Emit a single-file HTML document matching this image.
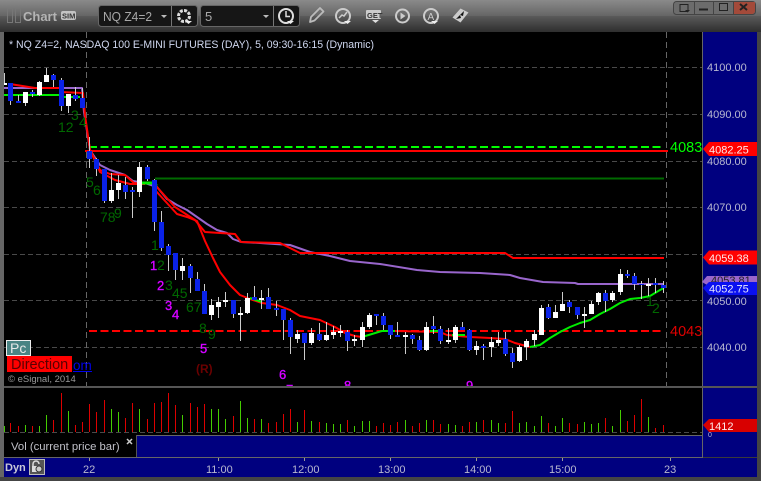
<!DOCTYPE html>
<html><head><meta charset="utf-8"><style>
html,body{margin:0;padding:0;background:#333;overflow:hidden}
svg{display:block}
text{font-family:"Liberation Sans",sans-serif}
.ax{font-size:11px;fill:#b8b8d0}
.g{font-size:14px;fill:#006800}
.m{font-size:13px;fill:#f0f;stroke:#a0f;stroke-width:.4}
</style></head><body>
<svg width="761" height="481" viewBox="0 0 761 481" xmlns="http://www.w3.org/2000/svg">
<defs>
<linearGradient id="t1" x1="0" y1="0" x2="0" y2="1"><stop offset="0" stop-color="#8a8a8a"/><stop offset="1" stop-color="#656565"/></linearGradient>
<linearGradient id="t2" x1="0" y1="0" x2="0" y2="1"><stop offset="0" stop-color="#5a5a5a"/><stop offset="1" stop-color="#2e2e2e"/></linearGradient>
<clipPath id="c"><rect x="4" y="32" width="698" height="354"/></clipPath>
</defs>
<rect width="761" height="481" fill="#3a3a3a"/>
<rect width="761" height="16" fill="url(#t1)"/>
<rect y="16" width="761" height="16" fill="url(#t2)"/>
<rect x="0" y="32" width="4" height="449" fill="#666"/>
<rect x="757" y="32" width="4" height="449" fill="#444"/>
<rect y="477" width="761" height="4" fill="#444"/>
<!-- toolbar -->
<g fill="none" stroke="#777" stroke-width="1"><rect x="7.5" y="8.5" width="5" height="14"/><rect x="15.5" y="8.5" width="5" height="14"/></g>
<text x="23" y="21" font-size="13" font-weight="bold" fill="#b4b4b4">Chart</text>
<rect x="61" y="11" width="15" height="9" rx="2" fill="#c4c4c4"/>
<text x="62" y="18.5" font-size="7.5" font-weight="bold" fill="#333">SIM</text>
<rect x="98.5" y="5.5" width="99" height="21" rx="3" fill="#161616" stroke="#666"/>
<rect x="200.5" y="5.5" width="99" height="21" rx="3" fill="#161616" stroke="#666"/>
<path d="M171.5 6V26M273.5 6V26" stroke="#777"/>
<text x="103" y="21" font-size="13" fill="#a8a8a8" textLength="49" lengthAdjust="spacingAndGlyphs">NQ Z4=2</text>
<text x="205" y="21" font-size="13" fill="#a8a8a8">5</text>
<path d="M161 15h6l-3 3zM263 15h6l-3 3z" fill="#bbb"/>
<!-- gear -->
<circle cx="184" cy="16" r="5.5" fill="none" stroke="#ddd" stroke-width="3" stroke-dasharray="3 1.3"/>
<circle cx="184" cy="16" r="2" fill="#161616"/>
<path d="M185 21h7l-3.500 3z" fill="#eee"/>
<!-- clock -->
<circle cx="286" cy="16" r="7" fill="none" stroke="#ddd" stroke-width="2"/>
<path d="M286 11v5.500h4" fill="none" stroke="#ddd" stroke-width="1.500"/>
<path d="M287 21h7l-3.500 3z" fill="#eee"/>
<!-- pencil -->
<path d="M310 22l1-5 9-9 3.500 3.500-9 9z" fill="none" stroke="#bbb" stroke-width="1.800" stroke-linejoin="round"/>
<!-- gauge -->
<circle cx="343" cy="16" r="7" fill="none" stroke="#ccc" stroke-width="2"/>
<path d="M339 18l3-3 2 1 3-4" fill="none" stroke="#ccc" stroke-width="1.500"/>
<path d="M344 21h7l-3.500 3z" fill="#eee"/>
<!-- GET -->
<rect x="366" y="10" width="15" height="9" rx="1" fill="#ccc"/>
<text x="367" y="18" font-size="7.500" font-weight="bold" fill="#333">GET</text>
<path d="M372 20h7l-3.500 3z" fill="#ddd"/>
<!-- play -->
<circle cx="402.500" cy="16" r="6.500" fill="none" stroke="#ccc" stroke-width="2"/>
<path d="M400.500 12.500l5 3.500-5 3.500z" fill="#ccc"/>
<!-- A -->
<circle cx="431" cy="16" r="7" fill="none" stroke="#ccc" stroke-width="2"/>
<text x="427.500" y="20" font-size="10" fill="#ccc">A</text>
<path d="M431 21h7l-3.500 3z" fill="#eee"/>
<!-- ticket -->
<path d="M453 18l8-9 8 4-8 10z" fill="#ccc" transform="translate(-.5 -.5)"/>
<path d="M456 19l4-4 1 3zM464 11l-4 4 3 1z" fill="#111"/>
<!-- window buttons -->
<rect x="673.500" y="1.500" width="82" height="13" rx="3" fill="#6c6c6c" stroke="#444"/>
<path d="M694.500 2V14M713.500 2V14M733.500 2V14" stroke="#444"/>
<path d="M734 2h21v9a3 3 0 0 1-3 3h-18z" fill="#a34a3a"/>
<path d="M680 4.500h8v7h-8z" fill="none" stroke="#222"/>
<path d="M685 10h5l-2.500 2.500z" fill="#222"/>
<path d="M699 9.500h9" stroke="#222" stroke-width="2"/>
<rect x="719.500" y="3.500" width="8" height="7" fill="none" stroke="#222"/>
<path d="M740 4l7 6M747 4l-7 6" stroke="#222" stroke-width="2"/>

<!-- chart panel -->
<rect x="4" y="32" width="698" height="354" fill="#000"/>
<rect x="703" y="32" width="54" height="425" fill="#00007f"/>
<path d="M702.500 32V457" stroke="#666"/>
<rect x="4" y="386" width="753" height="2" fill="#555"/>
<rect x="4" y="388" width="698" height="47" fill="#000"/>
<text x="9" y="48" font-size="11" fill="#d0d8f0" textLength="365" lengthAdjust="spacingAndGlyphs">* NQ Z4=2, NASDAQ 100 E-MINI FUTURES (DAY), 5, 09:30-16:15 (Dynamic)</text>

<g clip-path="url(#c)">
<path d="M4 67.500H702M4 114.500H702M4 161.500H702M4 207.500H702M4 254.500H702M4 300.500H702M4 347.500H702" stroke="#4a4a4a" stroke-dasharray="5 3"/>
<path d="M86.500 32V386M666.500 32V386" stroke="#666" stroke-dasharray="6 4"/>
<path d="M89 147H664" stroke="#00ff00" stroke-width="2" stroke-dasharray="8 3.500"/>
<path d="M85 151H668" stroke="#ff0000" stroke-width="2"/>
<path d="M155 178.500H664" stroke="#006a00" stroke-width="2"/>
<path d="M89 331H664" stroke="#ff0000" stroke-width="2" stroke-dasharray="8 3.500"/>
<text x="670" y="152" font-size="14.500" fill="#00ff00">4083</text>
<text x="670" y="336" font-size="14.500" fill="#e00000">4043</text>

<!-- EMA lines -->
<g fill="none" stroke-width="2" stroke-linejoin="round">
<path d="M4 88H82L84 112 90 150 100 165 110 170 125 175 133 181 145 183 157 187 167 199 177 205 187 210 197 217 207 224 217 230 227 233 233 239 241 242 260 243 290 245 310 252 330 256 350 261 380 264 417 270 440 272 480 273 510 275 520 278 543 282 575 283 578 284 664 284" stroke="#9966cc"/>
<path d="M4 95H60M40 88H60" stroke="#00ee00"/>
<path d="M60 97H80" stroke="#00ee00"/>
<path d="M10 84 35 88 60 88M60 92 83 93 85 115 90 150 100 170 110 174 125 175 134 183 145 184" stroke="#ff0000"/>
<path d="M90 150 100 172 115 180 130 184 145 184" stroke="#ff0000"/>
<path d="M140 183H152L157 186" stroke="#00ee00" stroke-width="3"/>
<path d="M155 185 175 207 195 220 205 232 235 234 241 242 280 243 300 253H505L513 258H664" stroke="#ff0000"/>
<path d="M155 190 177 214 187 217 197 221 205 241 213 258 220 272 230 285 240 295 250 299 262 303 277 305 290 310 300 316 320 320 335 327 345 333 355 336 362 337" stroke="#ff0000"/>
<path d="M362 337 372 334 382 331 395 331" stroke="#00ee00"/>
<path d="M395 331 440 332 447 335 470 337 490 338 505 339 515 343 530 347" stroke="#ff0000"/>
<path d="M430 331H440M452 335H465" stroke="#00ee00"/>
<path d="M530 347 540 345 550 338 560 332 570 327 580 323 590 320 600 314 610 309 620 303 630 299 640 298 650 296 660 290 664 288" stroke="#00ee00"/>
<path d="M250 298 262 302" stroke="#00ee00"/>
</g>

<!-- numbers -->
<text class="g" x="58" y="132">12</text><text class="g" x="71" y="120">3</text><text class="g" x="79" y="127">4</text>
<text class="g" x="86" y="187">5</text><text class="g" x="93" y="195">6</text><text class="g" x="100" y="222">78</text><text class="g" x="114" y="218">9</text>
<text class="g" x="151" y="250">1</text><text class="g" x="157" y="270">2</text><text class="g" x="165" y="290">3</text><text class="g" x="172" y="298">45</text><text class="g" x="186" y="312">67</text><text class="g" x="199" y="333">8</text><text class="g" x="208" y="339">9</text>
<text class="g" x="646" y="306">1</text><text class="g" x="652" y="313">2</text>
<text class="m" x="150" y="270">1</text><text class="m" x="157" y="290">2</text><text class="m" x="165" y="310">3</text><text class="m" x="172" y="319">4</text><text class="m" x="200" y="353">5</text>
<text class="m" x="279" y="379">6</text><text class="m" x="286" y="394">7</text><text class="m" x="344" y="390">8</text><text class="m" x="466" y="390">9</text>
<text x="196" y="373" font-size="12" font-weight="bold" fill="#6a0000">(R)</text>

<!-- wicks -->
<path shape-rendering="crispEdges" stroke="#cccccc" stroke-width="1" fill="none" d="M4.500 73V85M10.500 83V105M18.500 95V103M25.500 92V106M32.500 90V97M39.500 81V96M46.500 68V82M53.500 74V87M61.500 78V111M68.500 94V113M75.500 87V101M82.500 88V108M89.500 137V168M96.500 158V176M104.500 169V203M111.500 173V203M118.500 175V199M125.500 177V199M132.500 187V218M139.500 162V197M147.500 165V181M154.500 179V231M161.500 211V251M168.500 244V271M175.500 253V280M182.500 258V280M190.500 264V293M197.500 272V291M204.500 284V314M211.500 299V320M218.500 297V318M225.500 292V307M233.500 300V318M240.500 307V341M247.500 293V314M254.500 286V300M261.500 290V309M268.500 288V309M276.500 301V316M283.500 309V340M290.500 318V354M297.500 330V343M304.500 333V360M311.500 328V345M319.500 323V341M326.500 322V341M333.500 326V339M340.500 325V337M347.500 330V351M354.500 335V346M362.500 322V347M369.500 313V329M376.500 314V325M383.500 313V330M390.500 325V339M397.500 322V337M405.500 332V354M412.500 334V344M419.500 336V351M426.500 322V351M433.500 316V334M440.500 326V344M448.500 328V344M455.500 325V343M462.500 322V330M469.500 329V351M476.500 341V355M483.500 344V360M491.500 337V357M498.500 332V346M505.500 332V356M512.500 348V368M519.500 345V362M526.500 339V360M534.500 330V346M541.500 305V335M548.500 304V319M555.500 305V318M562.500 292V311M569.500 300V313M577.500 307V319M584.500 307V328M591.500 301V314M598.500 292V305M605.500 290V312M612.500 291V302M620.500 269V295M627.500 270V278M634.500 273V290M641.500 281V299M648.500 278V296M655.500 278V293M663.500 281V293"/>
<!-- white bodies -->
<path shape-rendering="crispEdges" stroke="#ffffff" stroke-width="5" fill="none" d="M4.500 83V85M25.500 92V103M39.500 82V95M46.500 75V82M68.500 94V106M111.500 190V201M118.500 183V190M139.500 167V192M182.500 266V271M211.500 305V315M218.500 302V307M225.500 300V302M240.500 313V315M247.500 298V313M261.500 298V300M297.500 334V339M311.500 333V343M326.500 335V340M333.500 332V335M340.500 331V333M354.500 339V341M362.500 327V340M369.500 315V327M405.500 335V337M426.500 327V350M448.500 340V342M455.500 327V340M476.500 346V350M491.500 342V347M498.500 340V343M519.500 347V361M526.500 341V347M534.500 334V340M541.500 308V335M555.500 312V318M562.500 304V311M584.500 314V316M591.500 304V314M598.500 293V302M612.500 293V300M620.500 274V292M648.500 284V286"/>
<!-- blue bodies -->
<path shape-rendering="crispEdges" stroke="#0a22e8" stroke-width="5" fill="none" d="M10.500 83V101M18.500 101V103M32.500 92V94M53.500 75V80M61.500 80V106M75.500 95V99M82.500 98V108M89.500 151V159M96.500 159V169M104.500 169V201M125.500 185V192M132.500 190V192M147.500 167V179M154.500 180V222M161.500 222V248M168.500 246V255M175.500 253V270M190.500 266V278M197.500 279V291M204.500 291V314M233.500 300V314M254.500 297V300M268.500 297V309M276.500 308V310M283.500 309V320M290.500 320V337M304.500 333V343M319.500 334V340M347.500 332V341M376.500 314V316M383.500 316V325M390.500 325V335M397.500 335V337M412.500 335V339M419.500 340V350M433.500 326V329M440.500 329V341M462.500 327V330M469.500 330V350M483.500 346V348M505.500 339V354M512.500 353V362M548.500 307V318M569.500 302V307M577.500 307V315M605.500 293V301M627.500 274V276M634.500 276V284M641.500 284V285M655.500 283V285M663.500 285V288"/>
</g>

<!-- logos -->
<rect x="6.500" y="340.500" width="24" height="15" fill="#4a8484" stroke="#eee"/>
<text x="10" y="353" font-size="14" fill="#e8e8e8">Pc</text>
<rect x="7" y="356" width="65" height="16" fill="#ff0000"/>
<text x="11" y="369" font-size="14.500" fill="#5a0000">Direction</text>
<text x="73" y="370" font-size="13.500" fill="#0000ee">om</text>
<path d="M73 371.500H92" stroke="#0000ee"/>
<text x="8" y="382" font-size="9.500" fill="#999">© eSignal, 2014</text>

<!-- price axis -->
<text class="ax" x="707" y="71">4100.00</text>
<text class="ax" x="707" y="118">4090.00</text>
<text class="ax" x="707" y="165">4080.00</text>
<text class="ax" x="707" y="211">4070.00</text>
<path d="M702 282l5-6h50v9h-50z" fill="#9966cc"/>
<text x="711" y="284" font-size="11" fill="#222">4053.81</text>
<text class="ax" x="707" y="305">4050.00</text>
<text class="ax" x="707" y="351">4040.00</text>
<path d="M703 149l6-7h48v14h-48z" fill="#ff0000"/>
<text x="709" y="153.500" font-size="11" fill="#ffe8e8">4082.25</text>
<path d="M703 257.500l6-7h48v14h-48z" fill="#ff0000"/>
<text x="709" y="262" font-size="11" fill="#ffe8e8">4059.38</text>
<path d="M703 288l6-6h48v13h-48z" fill="#0a10f0"/>
<text x="709" y="292.500" font-size="11" fill="#e8e8ff">4052.75</text>

<!-- volume -->
<path d="M4 432.500H702" stroke="#4a4a4a" stroke-dasharray="5 3"/>
<path shape-rendering="crispEdges" fill="none" stroke="#dd0000" d="M10.500 423V432M18.500 426V432M32.500 426V432M53.500 420V432M61.500 393V432M75.500 425V432M82.500 422V432M89.500 404V432M96.500 412V432M104.500 400V432M125.500 418V432M132.500 403V432M147.500 419V432M154.500 403V432M161.500 402V432M168.500 393V432M175.500 405V432M190.500 403V432M197.500 407V432M204.500 404V432M233.500 416V432M254.500 419V432M268.500 423V432M276.500 422V432M283.500 414V432M290.500 409V432M304.500 410V432M319.500 422V432M347.500 420V432M376.500 426V432M383.500 423V432M390.500 425V432M397.500 422V432M412.500 426V432M419.500 423V432M433.500 420V432M440.500 424V432M462.500 426V432M469.500 422V432M483.500 420V432M505.500 423V432M512.500 411V432M548.500 423V432M569.500 423V432M577.500 424V432M605.500 418V432M627.500 421V432M634.500 415V432M641.500 399V432M655.500 428V432M663.500 425V432"/>
<path shape-rendering="crispEdges" fill="none" stroke="#44cc00" d="M4.500 426V432M25.500 425V432M39.500 426V432M46.500 415V432M68.500 411V432M111.500 409V432M118.500 412V432M139.500 409V432M182.500 415V432M211.500 409V432M218.500 409V432M225.500 419V432M240.500 401V432M247.500 418V432M261.500 419V432M297.500 422V432M311.500 421V432M326.500 423V432M333.500 424V432M340.500 424V432M354.500 426V432M362.500 421V432M369.500 421V432M405.500 420V432M426.500 420V432M448.500 424V432M455.500 425V432M476.500 422V432M491.500 420V432M498.500 423V432M519.500 423V432M526.500 422V432M534.500 426V432M541.500 416V432M555.500 426V432M562.500 418V432M584.500 422V432M591.500 424V432M598.500 423V432M612.500 426V432M620.500 410V432M648.500 417V432"/>
<path d="M703 425l6-6h48v13h-48z" fill="#d80000"/>
<text x="709" y="430" font-size="11" fill="#ffe8e8">1412</text>
<text x="708" y="437" font-size="7" fill="#b8b8d0">0</text>

<!-- vol label row -->
<rect x="4" y="433" width="132" height="24" fill="#000"/>
<rect x="137" y="436" width="565" height="21" fill="#00007f"/>
<path d="M136 435.500H702" stroke="#666"/>
<path d="M136.500 435V457" stroke="#555"/>
<rect x="4" y="457" width="699" height="1" fill="#666"/>
<text x="11" y="450" font-size="11.300" fill="#c0c0c8">Vol (current price bar)</text>
<path d="M127 439l5 5M132 439l-5 5" stroke="#ccc" stroke-width="1.500"/>

<!-- time axis -->
<rect x="4" y="458" width="753" height="19" fill="#00007f"/>
<path d="M89.500 458v3M218.500 458v3M304.500 458v3M390.500 458v3M476.500 458v3M562.500 458v3M670.500 458v3" stroke="#999"/>
<text class="ax" x="83" y="473">22</text>
<text class="ax" x="206" y="473">11:00</text>
<text class="ax" x="292" y="473">12:00</text>
<text class="ax" x="378" y="473">13:00</text>
<text class="ax" x="464" y="473">14:00</text>
<text class="ax" x="549" y="473">15:00</text>
<text class="ax" x="664" y="473">23</text>
<text x="5" y="471" font-size="11" font-weight="bold" fill="#c8c8d8">Dyn</text>
<rect x="29.500" y="459.500" width="15" height="15" fill="#555" stroke="#bbb"/>
<path d="M33 466v-2a3 3 0 0 1 6 0" fill="none" stroke="#ddd" stroke-width="1.500"/>
<rect x="32" y="466" width="6" height="6" fill="#ddd"/>
<circle cx="39" cy="469" r="3" fill="#ccc" stroke="#333"/>
</svg>
</body></html>
